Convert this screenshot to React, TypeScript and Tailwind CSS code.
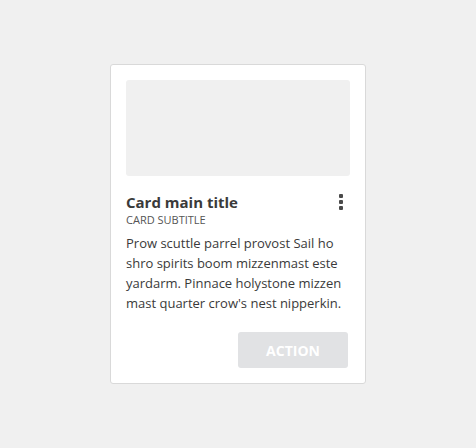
import React from 'react';

const App: React.FC = () => {
  return (
    <div className="min-h-[448px] w-full bg-[#f0f0f0] pt-16 flex justify-center" style={{ fontFamily: '"Open Sans", sans-serif' }}>
      <div className="w-[256px] h-[320px] bg-white border border-[#d9d9d9] rounded-[3px] p-[15px] flex flex-col">
        {/* Media */}
        <div className="h-[96px] rounded-[3px] bg-[#f0f0f0]" />

        {/* Header */}
        <div className="mt-[16px] flex items-start justify-between">
          <div>
            <h2 className="text-[15px] leading-[20px] font-bold text-[#3a3a3a]">Card main title</h2>
            <p className="text-[11px] leading-[16px] uppercase text-[#555]">Card subtitle</p>
          </div>
          <button className="mt-[1px] mr-[7px] flex flex-col gap-[2px] py-[1px]">
            <span className="w-[4px] h-[4px] rounded-[1px] bg-[#4a4a4a]" />
            <span className="w-[4px] h-[4px] rounded-[1px] bg-[#4a4a4a]" />
            <span className="w-[4px] h-[4px] rounded-[1px] bg-[#4a4a4a]" />
          </button>
        </div>

        {/* Body */}
        <p className="mt-[5px] text-[13px] leading-[20px] text-[#3a3a3a]">
          Prow scuttle parrel provost Sail ho shro spirits boom mizzenmast este yardarm. Pinnace holystone mizzen mast quarter crow's nest nipperkin.
        </p>

        {/* Actions */}
        <div className="mt-auto flex justify-end pr-[2px]">
          <button className="w-[110px] h-[36px] rounded-[3px] bg-[#e1e2e4] text-white text-[14px] font-bold">
            ACTION
          </button>
        </div>
      </div>
    </div>
  );
};

export default App;
